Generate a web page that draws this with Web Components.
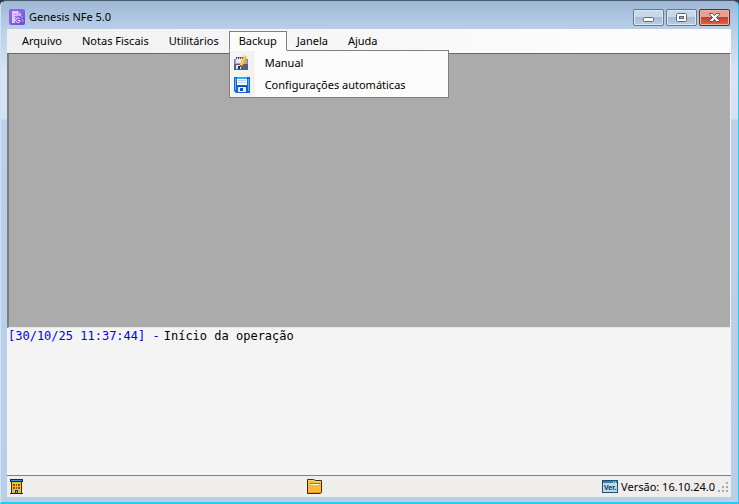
<!DOCTYPE html>
<html lang="pt-BR">
<head>
<meta charset="utf-8">
<title>Genesis NFe 5.0</title>
<style>
html,body{height:100%;margin:0}
body{background:#2b3a4a;font:11px/16px "Noto Sans","Open Sans",sans-serif;color:#000;overflow:hidden}
</style>
</head>
<body>
<app-window>
  <title-bar slot="title" label="Genesis NFe 5.0"></title-bar>
  <menu-strip slot="menu">
    <menu-entry label="Arquivo"></menu-entry>
    <menu-entry label="Notas Fiscais"></menu-entry>
    <menu-entry label="Utilitários"></menu-entry>
    <menu-entry label="Backup" open>
      <menu-option><ui-icon slot="icon" name="edit"></ui-icon>Manual</menu-option>
      <menu-option><ui-icon slot="icon" name="save"></ui-icon>Configurações automáticas</menu-option>
    </menu-entry>
    <menu-entry label="Janela"></menu-entry>
    <menu-entry label="Ajuda"></menu-entry>
  </menu-strip>
  <log-view>
    <log-line time="[30/10/25 11:37:44] -">Início da operação</log-line>
  </log-view>
  <status-bar slot="status">
    <ui-icon slot="start" name="building"></ui-icon>
    <ui-icon slot="middle" name="folder"></ui-icon>
    <ui-icon slot="end" name="version"></ui-icon>
    <span slot="end">Versão: 16.10.24.0</span>
  </status-bar>
</app-window>
<script>
const icons = {
  app: `<defs><linearGradient id="g" x2="1" y2="1"><stop stop-color="#9a5bea"/><stop offset=".5" stop-color="#8a63e4"/><stop offset="1" stop-color="#6a3fd8"/></linearGradient></defs>
    <rect width="16" height="16" rx="2" fill="url(#g)"/>
    <path d="M3 2h6l3 3v2A4 4 0 0 0 6 10v4H3z" fill="#d9ccf8"/><path d="M9 2l3 3H9z" fill="#b795ef"/>
    <path d="M5 5.500h3M5 7.500h2" stroke="#a98be8"/>
    <path d="M10.500 9.500A2.300 2.300 0 1 0 11 12.500V11.500H9" fill="none" stroke="#efe8ff"/>
    <path d="M12 7l2 1.500M12.500 10l1.500 1v2" fill="none" stroke="#bba8f4"/>`,
  edit: `<path d="M0 4h2V2h10v2h2v11H0z" fill="#7d859b"/><path d="M1 5h12v9H1z" fill="#a3a9bb"/>
    <path d="M2 3h8v5H2z" fill="#e6e8ef"/><path d="M2 2h1v2H2zM4 2h1v2H4zM6 2h1v2H6zM8 2h1v2H8z" fill="#4a5168"/>
    <path d="M0 9h14v6H0z" fill="#565e78"/><path d="M2 10h5v4H2z" fill="#dfe3ec"/><path d="M4 11h2v3H4z" fill="#25304d"/>
    <path d="M10 0l3 2-4 8-3 2V9z" fill="#f4b52c"/><path d="M10 1l1 1-4 8" fill="none" stroke="#ffe27b"/><path d="M6 10l2 1-2 1z" fill="#6d4718"/>`,
  save: `<path d="M0 0h16v16H2L0 14z" fill="#1763d2"/><path d="M1 1h1v12H1zM14 2h1v12h-1z" fill="#68aef5"/>
    <path d="M3 0h10v8H3z" fill="#fff"/><path d="M3 0h10v2H3z" fill="#2ab1e8"/><path d="M4 3.500h8M4 5.500h8" stroke="#b9cde6"/>
    <path d="M3 9h10v1H3z" fill="#0d47ac"/><path d="M4 10h8v5H4z" fill="#e3efff"/><path d="M6 11h3v3H6z" fill="#1355be"/>`,
  building: `<path d="M0 0h13v3H0z" fill="#142947"/><path d="M1 1h11v1H1z" fill="#3e8fd5"/><path d="M1 3h11v11H1z" fill="#4a2c16"/>
    <path d="M2 3h9v11H2z" fill="#f9b82b"/><path d="M3 5h2v2H3zM6 5h1v2H6zM8 5h2v2H8zM3 8h2v2H3zM6 8h1v2H6zM8 8h2v2H8z" fill="#7a5528"/>
    <path d="M5 11h3v3H5z" fill="#173b62"/><path d="M6 12h1v2H6z" fill="#58b9e8"/><path d="M0 14h13v1H0z" fill="#142947"/>`,
  folder: `<path d="M.5 .5h6l2 1h6v12l-1 1h-13z" fill="#fbb934" stroke="#392b20"/>
    <path d="M1 1.500h5l2 1h6" fill="none" stroke="#ffd66a"/><path d="M3 4h10v1H3z" fill="#3f8ed5"/><path d="M4 5h8v1H4z" fill="#e8f5ff"/><path d="M1 13.500h13" stroke="#e99d20"/>`,
  version: `<path d="M0 0h16v13H0z" fill="#1f4c72"/><path d="M1 1h14v11H1z" fill="#b7dcf1"/><path d="M1 1h14v2H1z" fill="#397daf"/>
    <path d="M11 2h1M13 2h1" stroke="#fff"/><text x="2" y="10" font-family="Liberation Sans,sans-serif" font-size="7" font-weight="700" fill="#102b43">Ver.</text>`
};
const sizes = {app:[16,16],edit:[15,16],save:[16,16],building:[13,15],folder:[16,15],version:[16,13]};

function define(name, render) {
  customElements.define(name, class extends HTMLElement {
    connectedCallback() {
      if (this.shadowRoot) return;
      this.attachShadow({mode:"open"}).innerHTML = render(this);
    }
  });
}

define("ui-icon", el => {
  const n = el.getAttribute("name"), [w,h] = sizes[n];
  return `<style>:host{display:block;flex:none}svg{display:block}</style>
  <svg width="${w}" height="${h}" viewBox="0 0 ${w} ${h}" aria-hidden="true">${icons[n]}</svg>`;
});

define("app-window", () => `<style>
  :host{display:flex;flex-direction:column;box-sizing:border-box;height:100vh;padding:0 7px 5px 6px;
    border:1px solid #4a5a6c;border-left-color:#cfe3f5;border-right-color:#22cdf2;border-bottom:2px solid #22cdf2;border-radius:6px 6px 0 0;
    background:linear-gradient(#9db8d6,#b9cfe8 28px,#d6e4f5 70px,#d3e2f4 118px,#b9d1ea 119px,#b9cfe9)}
  main{flex:1;display:grid;grid-template-rows:65fr 35fr;min-height:0}
  .mdi{background:#ababab;border:1px solid #696969;border-left:2px solid #7d7d7d;border-right:1px solid #f4f4f4;border-bottom:1px solid #e8e8e8}
  </style><slot name="title"></slot><slot name="menu"></slot><main><div class="mdi"></div><slot></slot></main><slot name="status"></slot>`);

define("title-bar", el => `<style>
  :host{display:flex;align-items:center;gap:4px;height:28px;padding:4px 1px 0 2px;box-sizing:border-box}
  h1{font:inherit;margin:0;flex:1}
  .buttons{display:flex;gap:2px;align-self:flex-start;padding-top:4px}
  button{display:grid;place-items:center;box-sizing:border-box;width:31px;height:17px;padding:0;border:1px solid #62788f;border-radius:2px;
    background:linear-gradient(#c9d9ea 45%,#a6bdd6 50%,#bacde2);box-shadow:inset 0 0 0 1px #dbe7f3}
  .close{border-color:#6b2626;background:linear-gradient(#e3a294 45%,#c3402c 50%,#d56a50);box-shadow:inset 0 0 0 1px #eab3a6}
  svg{display:block}
  </style><ui-icon name="app"></ui-icon><h1>${el.getAttribute("label")}</h1>
  <div class="buttons">
  <button aria-label="Minimizar"><svg width="11" height="9"><rect x=".5" y="4.500" width="10" height="4" rx="1" fill="#fff" stroke="#5c6470"/></svg></button>
  <button aria-label="Maximizar"><svg width="11" height="9"><rect x=".5" y=".5" width="10" height="8" rx="1" fill="#fff" stroke="#5c6470"/><rect x="3.500" y="3.500" width="4" height="2" fill="#9fb6cf" stroke="#5c6470"/></svg></button>
  <button class="close" aria-label="Fechar"><svg width="11" height="9"><path d="M.5 .5h3l2 2 2-2h3v1l-3 3 3 3v1h-3l-2-2-2 2h-3v-1l3-3-3-3z" fill="#fff" stroke="#5b4a56"/></svg></button>
  </div>`);

define("menu-strip", () => `<style>
  :host{display:block;background:linear-gradient(90deg,#f0f0f0,#fcfcfc 80%)}
  nav{display:flex;box-sizing:border-box;padding:2px 5px 0;height:24px}
  </style><nav><slot></slot></nav>`);

define("menu-entry", el => `<style>
  :host{display:block;position:relative}
  button{font:inherit;color:inherit;background:none;border:1px solid transparent;padding:0 9px;height:20px;display:block}
  :host([open]) button{background:#fcfcfc;border-color:#808080;border-bottom-color:#fcfcfc;position:relative;z-index:2}
  .menu{position:absolute;z-index:1;top:19px;left:0;border:1px solid #808080;box-sizing:border-box;min-width:220px;padding:1px;
    background:linear-gradient(90deg,#f6f6f6,#f0f0f0 24px,#fcfcfc 25px)}
  </style><button aria-haspopup="menu">${el.getAttribute("label")}</button>
  ${el.hasAttribute("open") ? `<div class="menu" role="menu"><slot></slot></div>` : ""}`);

define("menu-option", () => `<style>
  :host{display:block}
  button{display:grid;grid-template-columns:19px 1fr;gap:12px;align-items:center;width:100%;height:22px;padding:0 8px 0 3px;
    border:0;background:none;color:inherit;font:inherit;text-align:left;white-space:nowrap}
  </style><button role="menuitem"><slot name="icon"></slot><span><slot></slot></span></button>`);

define("log-view", () => `<style>
  :host{display:block;background:#f4f4f4;border-bottom:1px solid #808080;overflow:auto;padding-left:1px}
  </style><slot></slot>`);

define("log-line", el => `<style>
  :host{display:flex;gap:4px;font:12px/16px "DejaVu Sans Mono","Liberation Mono",monospace}
  time{color:#0000f0}
  </style><time>${el.getAttribute("time")}</time><span><slot></slot></span>`);

define("status-bar", () => `<style>
  :host{display:block;background:#f0eded}
  footer{display:grid;grid-template-columns:1fr auto 1fr;align-items:center;height:21px;padding:0 2px 0 3px}
  .middle{padding-right:110px}
  .end{display:flex;align-items:center;justify-content:flex-end;gap:3px}
  svg{align-self:end}
  </style><footer><div><slot name="start"></slot></div><div class="middle"><slot name="middle"></slot></div>
  <div class="end"><slot name="end"></slot><svg width="11" height="14" aria-hidden="true"><path d="M8 1h2v2H8zM8 5h2v2H8zM8 9h2v2H8zM4 5h2v2H4zM4 9h2v2H4zM0 9h2v2H0z" fill="#aaa"/></svg></div></footer>`);
</script>
</body>
</html>
